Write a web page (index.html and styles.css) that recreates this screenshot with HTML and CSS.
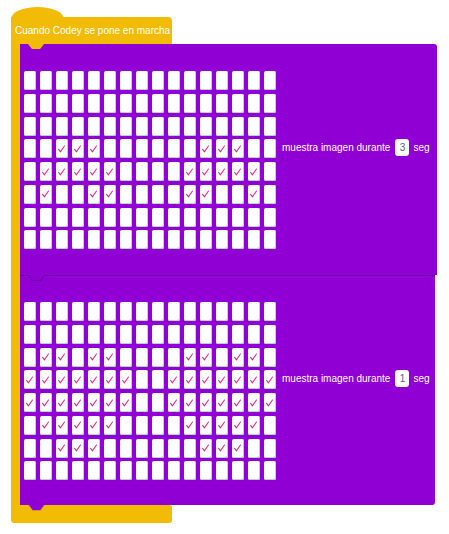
FILE: index.html
```html
<!DOCTYPE html>
<html lang="es">
<head>
    <meta charset="UTF-8">
    <meta name="viewport" content="width=device-width, initial-scale=1.0">
    <title>Codey - bloques</title>
    <link rel="stylesheet" href="styles.css">
</head>
<body>

    <div class="script">
        <div class="hat">Cuando Codey se pone en marcha</div>

        <div class="mouth">
            <div class="arm"></div>
            <div class="stack">
                <div class="block first">
                    <div class="matrix" data-rows="0000000000000000,0000000000000000,0000000000000000,0011100000011100,0111110000111110,0100110000110010,0000000000000000,0000000000000000"></div>
                    <div class="label">muestra imagen durante <span class="num">3</span> seg</div>
                </div>
                <div class="block second">
                    <div class="matrix" data-rows="0000000000000000,0000000000000000,0110110000110110,1111111001111111,1111111001111111,0111110000111110,0011100000011100,0000000000000000"></div>
                    <div class="label">muestra imagen durante <span class="num">1</span> seg</div>
                </div>
            </div>
        </div>

        <div class="foot"></div>
    </div>

    <script>
        // check dibujado en cada led encendido
        const CHECK = '<svg viewBox="0 0 8 8" width="7" height="8"><path d="M0.7 4.4 L2.7 7.3 L7.4 0.5" fill="none" stroke="#e2306a" stroke-width="1.2" stroke-linecap="round" stroke-linejoin="round"/></svg>';

        document.querySelectorAll(".matrix").forEach(function (matrix) {
            matrix.dataset.rows.split(",").forEach(function (row) {
                for (const c of row) {
                    const led = document.createElement("span");
                    led.className = "led";
                    if (c === "1") led.innerHTML = CHECK;
                    matrix.appendChild(led);
                }
            });
        });
    </script>
</body>
</html>
```

FILE: styles.css
```css
body {
    margin: 0;
    background: #fff;
    font-family: "Liberation Sans", Arial, sans-serif;
    font-size: 10px;
    color: #fff;
}

/* Bloque de evento (amarillo) */
.script {
    display: flex;
    flex-direction: column;
    align-items: flex-start;
    margin: 17px 0 0 11px;
}

.hat {
    position: relative;
    z-index: 3;
    width: 157px;
    height: 27px;
    line-height: 28px;
    padding-left: 4px;
    background: #f2bc06;
    border-radius: 0 4px 0 0;
    white-space: nowrap;
}

/* la joroba del bloque */
.hat::before {
    content: "";
    position: absolute;
    left: 0;
    top: -10px;
    width: 53px;
    height: 24px;
    background: #f2bc06;
    border-radius: 50%;
    z-index: -1;
}

/* pestaña que encaja en el primer bloque */
.hat::after {
    content: "";
    position: absolute;
    left: 17px;
    top: 100%;
    width: 16px;
    height: 5px;
    background: #f2bc06;
    clip-path: polygon(0 0, 100% 0, 75% 100%, 25% 100%);
}

.mouth {
    display: flex;
}

.arm {
    width: 9px;
    background: #f2bc06;
}

.stack {
    display: flex;
    flex-direction: column;
}

.foot {
    width: 161px;
    height: 18px;
    background: #f2bc06;
    border-radius: 0 3px 3px 3px;
}

/* Bloques morados */
.block {
    position: relative;
    display: flex;
    align-items: flex-start;
    gap: 6px;
    background: #9000d4;
    padding: 27px 7px 0 4px;
    height: 204px;
    border-radius: 0 3px 0 0;
}

.block.first {
    z-index: 2;
}

.block.second {
    z-index: 1;
    border-top: 1px solid #6a00a0;
    padding-top: 26px;
    height: 203px;
    width: 404px;
    border-radius: 0 0 3px 0;
}

/* pestaña inferior */
.block::before,
.block::after {
    content: "";
    position: absolute;
    top: 100%;
    clip-path: polygon(0 0, 100% 0, 75% 100%, 25% 100%);
}

.block::before {
    left: 8px;
    width: 17px;
    height: 6px;
    background: #6a00a0;
}

.block::after {
    left: 9px;
    width: 15px;
    height: 5px;
    background: #9000d4;
}

.block.second::before {
    background: #c79a2a;
}

.matrix {
    display: grid;
    grid-template-columns: repeat(16, 12px);
    grid-auto-rows: 19px;
    column-gap: 4px;
    row-gap: 3.75px;
}

.led {
    display: flex;
    align-items: center;
    justify-content: center;
    background: #fff;
    border-radius: 2px;
    box-shadow: inset -1px -1px 0 #b9d6c4;
}

.led svg {
    display: block;
    margin-right: 1px;
}

.label {
    display: flex;
    align-items: center;
    gap: 4px;
    margin-top: 68px;
    height: 17px;
    white-space: nowrap;
}

.num {
    display: inline-block;
    width: 14px;
    height: 17px;
    line-height: 17px;
    margin-left: 1px;
    text-align: center;
    background: #fff;
    color: #575e75;
    border-radius: 3px;
}
```
